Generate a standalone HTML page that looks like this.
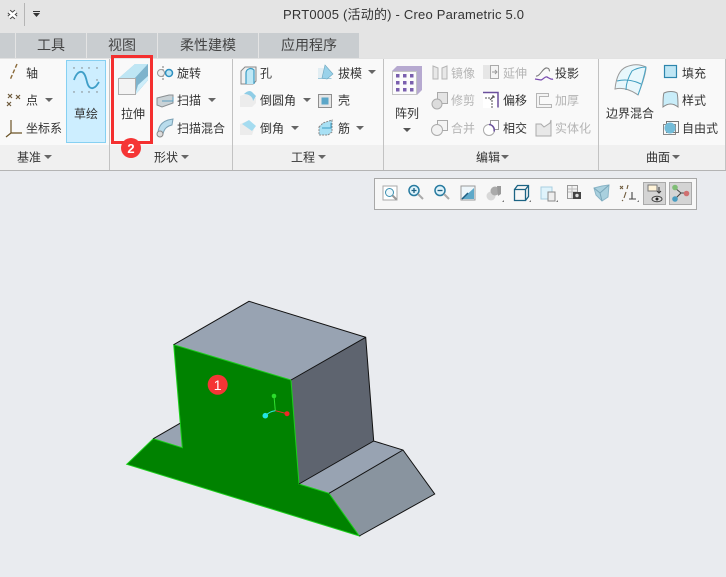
<!DOCTYPE html>
<html><head><meta charset="utf-8"><style>
html,body{margin:0;padding:0;background:#e9ebef;width:726px;height:577px;overflow:hidden}
svg{display:block;position:absolute;left:0;top:0}
text{font-family:"Liberation Sans","Noto Sans CJK SC",sans-serif;font-size:12px;fill:#333}
.g{fill:#b4b4b4}
.t{font-size:14px;fill:#444;text-anchor:middle}
.m{fill:#555}
</style></head><body>
<svg width="726" height="577" viewBox="0 0 726 577" xmlns="http://www.w3.org/2000/svg">
<rect width="726" height="577" fill="#e9ebef"/>
<rect width="726" height="58" fill="#e4e4e4"/>
<!-- quick access -->
<path d="M9 11.500l7 6m0-6l-7 6" stroke="#444" stroke-width="4.500" fill="none"/>
<path d="M9 11.500l7 6m0-6l-7 6" stroke="#fff" stroke-width="2.500" fill="none"/>
<rect x="24" y="3" width="1" height="23" fill="#b5b5b5"/>
<rect x="33" y="11" width="7" height="1" fill="#333"/><path d="M33 13h7l-3.500 4z" fill="#333"/>
<text x="283" y="19" style="font-size:13px" textLength="241" fill="#222">PRT0005 (活动的) - Creo Parametric 5.0</text>
<!-- tabs -->
<rect x="0" y="33" width="15" height="25" fill="#c9cdd0"/>
<rect x="16" y="33" width="70" height="25" fill="#c9cdd0"/>
<rect x="87" y="33" width="70" height="25" fill="#c9cdd0"/>
<rect x="158" y="33" width="100" height="25" fill="#c9cdd0"/>
<rect x="259" y="33" width="100" height="25" fill="#c9cdd0"/>
<text class="t" x="51" y="50">工具</text><text class="t" x="122" y="50">视图</text><text class="t" x="208" y="50">柔性建模</text><text class="t" x="309" y="50">应用程序</text>
<!-- ribbon -->
<rect x="0" y="58" width="726" height="87" fill="#f9f9f9"/>
<rect x="0" y="145" width="726" height="25" fill="#f0f0f0"/>
<rect x="0" y="170" width="726" height="1" fill="#b4b4b4"/>
<rect x="0" y="58" width="726" height="1" fill="#e2e2e2"/>
<g fill="#c2c2c2"><rect x="109" y="59" width="1" height="111"/><rect x="232" y="59" width="1" height="111"/><rect x="383" y="59" width="1" height="111"/><rect x="598" y="59" width="1" height="111"/><rect x="725" y="59" width="1" height="111"/></g>

<!-- 基准 -->
<path d="M17 64l-7 16" stroke="#8a6a3a" stroke-width="1.400" stroke-dasharray="4 2" fill="none"/>
<g stroke="#6e5a3c" stroke-width="1.200" fill="none"><path d="M8 94l4 4m0-4l-4 4M16 95l4 4m0-4l-4 4M7 102l4 4m0-4l-4 4"/></g>
<path d="M11 120v13M11 133h11M11 133l-5 4" stroke="#6b5326" stroke-width="1.200" fill="none"/>
<text x="26" y="77.500">轴</text><text x="26" y="104.500">点</text><text x="26" y="132.500">坐标系</text>
<path d="M45 98h8l-4 4z" fill="#666"/>
<rect x="66.500" y="60.500" width="39" height="82" fill="#cdeeff" stroke="#86d0f2"/>
<g fill="#777"><circle cx="74" cy="68" r=".7"/><circle cx="82" cy="68" r=".7"/><circle cx="89" cy="68" r=".7"/><circle cx="97" cy="68" r=".7"/><circle cx="74" cy="92" r=".7"/><circle cx="82" cy="92" r=".7"/><circle cx="89" cy="92" r=".7"/><circle cx="97" cy="92" r=".7"/><circle cx="97" cy="80" r=".7"/></g>
<path d="M74 80c2-6 5-9 8-8s4 6 5 10 3 7 6 6 4-3 6-6" stroke="#3f9fc8" stroke-width="1.800" fill="none"/>
<text x="74" y="118">草绘</text>
<text x="17" y="161.500">基准</text><path d="M44 155h8l-4 4z" fill="#666"/>

<!-- 形状 -->
<path d="M119 78l16-14h13v16l-13 15z" fill="#7fb9d3"/>
<path d="M119 78l16-14h13l-13 14z" fill="#bfe6f4"/><path d="M135 78l13-14v16l-13 15z" fill="#7db3cc"/><path d="M135 95l13-15v-4l-10 9z" fill="#cdeefa"/>
<rect x="118.500" y="78.500" width="17" height="16" fill="#f3f3f3" stroke="#aeaeae"/>
<text x="121" y="118">拉伸</text>
<g fill="none"><path d="M163 66v14" stroke="#777" stroke-dasharray="2 1"/><circle cx="161" cy="73" r="3.500" stroke="#999" fill="#eee"/><circle cx="169" cy="73" r="3.500" stroke="#2e90c0" stroke-width="1.500" fill="#bfe6f4"/></g>
<path d="M157 98l12-3h4v8l-11 4-5-2z" fill="#c9d2d6" stroke="#8a8f92"/><path d="M162 101h11v-4" fill="none" stroke="#5a9fc0"/>
<path d="M158 134c0-8 4-12 10-14l5-1-1 6c-5 1-8 4-9 9z" fill="#b9dcec" stroke="#7ba1b5"/><circle cx="160" cy="134" r="3" fill="#ddd" stroke="#888"/>
<text x="177" y="77.500">旋转</text><text x="177" y="104.500">扫描</text><text x="177" y="132.500">扫描混合</text>
<path d="M208 98h8l-4 4z" fill="#666"/>
<text x="154" y="161.500">形状</text><path d="M181 155h8l-4 4z" fill="#666"/>

<!-- 工程 -->
<path d="M241 71l4-4h11v14l-3 3h-12z" fill="#f0f0f0" stroke="#888"/><path d="M246 84v-11c0-4 5-6 8-3v14" fill="#bfe8f6" stroke="#3a9cc4" stroke-width="1.200"/>
<path d="M240 107v-11l8-3 8 5v5l-4 4z" fill="#ececec"/><path d="M244 94c3-3 6-4 8-2l4 4-3 5c0-4-4-7-9-7z" fill="#8fcde6"/>
<path d="M240 135v-11l7-3 8 5-3 9z" fill="#ececec"/><path d="M242 124l7-4 7 6-4 5z" fill="#a5dcf0"/>
<text x="260" y="77.500">孔</text><text x="260" y="104.500">倒圆角</text><text x="260" y="132.500">倒角</text>
<path d="M303 98h8l-4 4z" fill="#666"/><path d="M291 126h8l-4 4z" fill="#666"/>
<path d="M318 68h7l-1 10h-6z" fill="#e2eef3"/><path d="M318 78h14l-1 1h-13z" fill="#9ec9dc"/><path d="M325 65l8 9-6 5-5-1z" fill="#99d2ea" stroke="#6fa7bf" stroke-width=".6"/>
<rect x="318.500" y="94.500" width="13" height="13" fill="#e6e6e6" stroke="#8e8e8e"/><rect x="321.500" y="97.500" width="7" height="7" fill="#5ba6c8"/>
<path d="M319 127l4-4 9-3v12l-4 3h-9z" fill="#a8e0f4" stroke="#888" stroke-dasharray="2 1"/><path d="M322 128h9v-5" fill="none" stroke="#3a9cc4"/>
<text x="338" y="77.500">拔模</text><text x="338" y="104.500">壳</text><text x="338" y="132.500">筋</text>
<path d="M368 70h8l-4 4z" fill="#666"/><path d="M356 126h8l-4 4z" fill="#666"/>
<text x="291" y="161.500">工程</text><path d="M318 155h8l-4 4z" fill="#666"/>

<!-- 编辑 -->
<path d="M392 71l5-5h25v24l-5 5z" fill="#b6a9d0"/><rect x="392.500" y="71.500" width="24" height="23" fill="#fbfbfb" stroke="#c4c4c4"/>
<g fill="#7a5fae"><rect x="396" y="74" width="3.500" height="3.500"/><rect x="403" y="74" width="3.500" height="3.500"/><rect x="410" y="74" width="3.500" height="3.500"/><rect x="396" y="81" width="3.500" height="3.500"/><rect x="403" y="81" width="3.500" height="3.500"/><rect x="410" y="81" width="3.500" height="3.500"/><rect x="396" y="88" width="3.500" height="3.500"/><rect x="403" y="88" width="3.500" height="3.500"/><rect x="410" y="88" width="3.500" height="3.500"/></g>
<text x="395" y="117.500">阵列</text><path d="M403 128h8l-4 4z" fill="#555"/>
<g stroke="#b5b5b5" fill="#e8e8e8"><path d="M433 66l5 2v11h-5zM447 66l-5 2v11h5z"/></g>
<g stroke="#aaa" fill="#e4e4e4"><rect x="437.500" y="92.500" width="10" height="11"/><circle cx="437" cy="104" r="5" fill="#dcdcdc"/><rect x="437.500" y="120.500" width="10" height="10" fill="#f4f4f4"/><circle cx="437" cy="130" r="5.500" fill="#f2f2f2"/></g>
<text class="g" x="451" y="77.500">镜像</text><text class="g" x="451" y="104.500">修剪</text><text class="g" x="451" y="132.500">合并</text>
<rect x="483" y="65" width="8" height="14" fill="#e6e6e6"/><rect x="490.500" y="65.500" width="8" height="13" fill="#f4f4f4" stroke="#aaa"/><path d="M492 72h5m-2-2l2 2-2 2" stroke="#999" fill="none"/>
<rect x="483" y="92" width="15" height="16" fill="#fff"/><path d="M483 92.500h15v15" fill="none" stroke="#6a4f9c" stroke-width="1.500"/><path d="M485 98h7v10M490 100l4-4m0 0h-3m3 0v3" stroke="#555" fill="none" stroke-dasharray="2 1"/>
<rect x="490.500" y="120.500" width="8" height="9" fill="#fff" stroke="#999"/><circle cx="489" cy="130" r="5.500" fill="#fff" stroke="#aaa"/><path d="M489 124.500a5.500 5.500 0 0 1 5 7" fill="none" stroke="#6a4f9c" stroke-width="1.500"/>
<text class="g" x="503" y="77.500">延伸</text><text x="503" y="104.500">偏移</text><text x="503" y="132.500">相交</text>
<path d="M536 76c4 1 7-9 11-8s1 3 3 3" stroke="#777" fill="none"/><path d="M535 79l6 1c3-1 4-4 6-3s4 3 6 2" stroke="#7a4db0" stroke-width="1.300" fill="none"/>
<path d="M536.500 93.500h12v3h-9v8h12v3h-15z" fill="#f4f4f4" stroke="#b5b5b5"/>
<path d="M536 124l5 0 3 3 6-4 1-3v16h-15z" fill="#e8e8e8" stroke="#aaa"/>
<text x="555" y="77.500">投影</text><text class="g" x="555" y="104.500">加厚</text><text class="g" x="555" y="132.500">实体化</text>
<text x="476" y="161.500">编辑</text><path d="M501 155h8l-4 4z" fill="#666"/>

<!-- 曲面 -->
<path d="M615 89c1-10 4-19 11-22 7-3 14-3 20 0 0 6-3 15-8 28-7-5-15-8-23-6z" fill="#e8f7fc" stroke="#9a9a9a"/>
<path d="M626 90c0-8 3-14 6-19 3-2 9-4 14-4M617 81c8-2 16-1 24 3" fill="none" stroke="#3d9cbe"/><path d="M638 95c3-8 6-18 8-28" fill="none" stroke="#4aa7c8"/>
<text x="606" y="117.500">边界混合</text>
<rect x="664.500" y="65.500" width="12" height="12" fill="#bfe6f4" stroke="#2d86ad" stroke-width="1.200"/>
<path d="M663 107c0-6 0-12 1-14 4-2 10-2 13 0 1 3 1 8 1 14-5-4-10-4-15 0z" fill="#c9edf9" stroke="#888"/>
<rect x="663.500" y="124.500" width="12" height="10" fill="none" stroke="#888"/><rect x="666.500" y="121.500" width="12" height="11" fill="none" stroke="#777"/><circle cx="670" cy="128" r="5.500" fill="#74bcd8"/>
<text x="682" y="77.500">填充</text><text x="682" y="104.500">样式</text><text x="682" y="132.500">自由式</text>
<text x="646" y="161.500">曲面</text><path d="M672 155h8l-4 4z" fill="#666"/>

<!-- red box -->
<rect x="112.500" y="56.500" width="39" height="86" fill="none" stroke="#f42f2f" stroke-width="3"/>
<circle cx="131" cy="148" r="10" fill="#f53535"/>
<text x="131" y="153" text-anchor="middle" style="font-size:13px;font-weight:bold;fill:#fff">2</text>

<!-- toolbar -->
<rect x="374.500" y="178.500" width="322" height="31" fill="#f7f7f7" stroke="#a8a8a8"/>
<rect x="643.500" y="182.500" width="22" height="22" fill="#d4d4d4" stroke="#aaa"/>
<rect x="669.500" y="182.500" width="22" height="22" fill="#d4d4d4" stroke="#aaa"/>
<rect x="383" y="186" width="14" height="14" fill="#fff" stroke="#aaa"/><circle cx="389.500" cy="192.500" r="4" fill="#eef8fc" stroke="#3b8fb0"/><path d="M392.500 195.500l4 4" stroke="#999" stroke-width="2"/>
<circle cx="414" cy="190.500" r="5" fill="#dff3fb" stroke="#287ba0" stroke-width="1.500"/><path d="M411.500 190.500h5M414 188v5" stroke="#1b5f80" stroke-width="1.300"/><path d="M418 194l5 5" stroke="#aaa" stroke-width="2"/>
<circle cx="440" cy="190.500" r="5" fill="#dff3fb" stroke="#287ba0" stroke-width="1.500"/><path d="M437.500 190.500h5" stroke="#1b5f80" stroke-width="1.300"/><path d="M444 194l5 5" stroke="#aaa" stroke-width="2"/>
<rect x="461" y="186" width="14" height="14" fill="#eef6fa" stroke="#9a9a9a"/><path d="M462 199l12-11v11z" fill="#5ea9c9"/><path d="M462 199l6-6" stroke="#1d5f82" stroke-width="1.500"/>
<circle cx="491" cy="196" r="4.500" fill="#d8d8d8"/><circle cx="495" cy="191" r="4.500" fill="#aaa"/><path d="M497 186l4 0 0 8-3 2z" fill="#999"/><path d="M502 202h2v-2z" fill="#777"/>
<path d="M514.500 189.500h11v11h-11zM514.500 189.500l3-4h11v11l-3 4M525.500 189.500l3-4" fill="none" stroke="#1c6484" stroke-width="1.300"/><path d="M529 202h2v-2z" fill="#777"/>
<rect x="541" y="187" width="11" height="12" fill="#dff3fb" stroke="#aacfe0"/><rect x="548" y="192" width="7" height="9" fill="#eee" stroke="#888"/><path d="M556 202h2v-2z" fill="#777"/>
<rect x="567.500" y="185.500" width="10" height="13" fill="#f2f2f2" stroke="#999"/><path d="M568 189h9M568 192h9M572 186v12" stroke="#bbb"/><rect x="573" y="192" width="8" height="7" fill="#444"/><circle cx="577" cy="195.500" r="1.700" fill="#ddd"/>
<path d="M594 188l8-2 7-1-1 12-6 4-6-6z" fill="#a9d0de" stroke="#8ab5c7"/><path d="M594 188l6 5 9-8M600 193l2 8" fill="none" stroke="#7aa7ba"/>
<g stroke="#6e5a3c" fill="none" stroke-width="1.100"><path d="M620 186l3 3m0-3l-3 3M628 185l-1 4M626 192l-2 6M623 200l-1 1"/><path d="M632 192v7m-3 0h7" stroke="#444"/></g><path d="M637 202h2v-2z" fill="#777"/>
<rect x="648" y="185" width="9" height="6" fill="#fff3d8" stroke="#777"/><path d="M659 187v5m-2-1l2 2 2-2" stroke="#333" fill="none"/><ellipse cx="657" cy="199" rx="5" ry="2.800" fill="#ddd" stroke="#444"/><circle cx="657" cy="199" r="1.500" fill="#222"/>
<path d="M675 188l6 5-6 6M681 193h6" stroke="#444" fill="none"/><circle cx="675" cy="187.500" r="2.800" fill="#7fbd75"/><circle cx="675" cy="199" r="2.800" fill="#4a9cc0"/><circle cx="686.500" cy="193.500" r="2.800" fill="#d07070"/>

<!-- model -->
<path d="M173.700 344.700L249 301.300 365.700 337.300 291 380z" fill="#98a3b2"/>
<path d="M291 380L365.700 337.300 373.700 441 299 484z" fill="#5e646f"/>
<path d="M153.300 438.700L180 423.300 182.300 447.700z" fill="#98a3b2"/>
<path d="M299 484L373.700 441 403 450 329 493.300z" fill="#98a3b2"/>
<path d="M329 493.300L403 450 434.700 494 359.300 536z" fill="#89949f"/>
<path d="M173.700 344.700L291 380 299 484 329 493.300 359.300 536 126.700 464.300 153.300 438.700 182.300 447.700z" fill="#008200" stroke="#1ccf1c" stroke-width="1"/>
<path d="M173.700 344.700L249 301.300 365.700 337.300 373.700 441M291 380L365.700 337.300M299 484L373.700 441 403 450 434.700 494 359.300 536M329 493.300L403 450M153.300 438.700L180 423.300" fill="none" stroke="#111" stroke-width="1"/>
<path d="M275.300 410.700L274 396" stroke="#30e030"/><circle cx="274" cy="396" r="2.300" fill="#2bdc2b"/>
<path d="M275.300 410.700L287 413.700" stroke="#f03030"/><circle cx="287" cy="413.700" r="2.500" fill="#ee2828"/>
<path d="M275.300 410.700C271 411 268 413 265.300 415.700" stroke="#30e6e6" fill="none"/><circle cx="265.300" cy="415.700" r="2.800" fill="#22e4e4"/>
<circle cx="217.700" cy="384.700" r="10" fill="#f53535"/>
<text x="217.700" y="390" text-anchor="middle" style="font-size:14px;fill:#fff">1</text>
</svg>
</body></html>
